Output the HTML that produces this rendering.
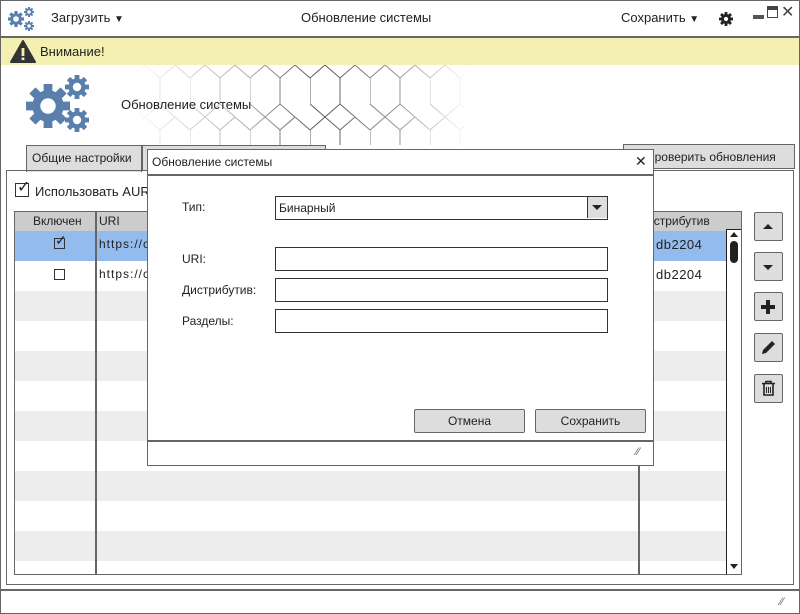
<!DOCTYPE html>
<html><head><meta charset="utf-8"><style>
*{box-sizing:border-box;margin:0;padding:0}
body{width:800px;height:614px;position:relative;background:#fff;font-family:"Liberation Sans",sans-serif;font-size:12px;color:#222;overflow:hidden}
.a{position:absolute}
.bx{position:absolute;border:1.5px solid #666}
.btn{position:absolute;background:#ddd;border:1.5px solid #666;border-radius:2px;text-align:center}
.inp{position:absolute;border:1.5px solid #333;background:#fff;height:24px}
</style></head><body>
<svg width="0" height="0" style="position:absolute"><defs>
<g id="gear"><circle r="0.72" fill="#5a7fad"/>
<g fill="#5a7fad"><rect x="-0.2" y="-1" width="0.4" height="2"/><rect x="-0.2" y="-1" width="0.4" height="2" transform="rotate(45)"/><rect x="-0.2" y="-1" width="0.4" height="2" transform="rotate(90)"/><rect x="-0.2" y="-1" width="0.4" height="2" transform="rotate(135)"/></g>
<circle r="0.35" fill="#fff"/></g>
<g id="gk"><circle r="0.72" fill="#222"/>
<g fill="#222"><rect x="-0.2" y="-1" width="0.4" height="2"/><rect x="-0.2" y="-1" width="0.4" height="2" transform="rotate(45)"/><rect x="-0.2" y="-1" width="0.4" height="2" transform="rotate(90)"/><rect x="-0.2" y="-1" width="0.4" height="2" transform="rotate(135)"/></g>
<circle r="0.3" fill="#fff"/></g>
</defs></svg>
<div class="bx" style="left:0;top:0;width:800px;height:614px"></div>
<svg class="a" style="left:6px;top:4px" width="30" height="28">
<use href="#gear" transform="translate(10,15) scale(8)"/><use href="#gear" transform="translate(23,8) scale(5)"/><use href="#gear" transform="translate(23,22) scale(5)"/></svg>
<div class="a" style="left:51px;top:10px;font-size:13px">Загрузить <span style="font-size:10px">▼</span></div>
<div class="a" style="left:301px;top:10px;font-size:13px">Обновление системы</div>
<div class="a" style="left:621px;top:10px;font-size:13px">Сохранить <span style="font-size:10px">▼</span></div>
<svg class="a" style="left:718px;top:11px" width="16" height="16"><use href="#gk" transform="translate(8,8) scale(7)"/></svg>
<div class="a" style="left:753px;top:15px;width:11px;height:4px;background:#555"></div>
<div class="a" style="left:767px;top:6px;width:11px;height:12px;border:1.5px solid #444;border-top-width:4px"></div>
<div class="a" style="left:781px;top:2px;font-size:16px;color:#444">✕</div>
<div class="a" style="left:0;top:36px;width:800px;height:1.5px;background:#666"></div>
<div class="a" style="left:1px;top:38px;width:798px;height:27px;background:#f3f0b1"></div>
<svg class="a" style="left:10px;top:40px" width="26" height="23"><path d="M13 1 L25 22 L1 22 Z" fill="#333" stroke="#333" stroke-linejoin="round" stroke-width="2"/><rect x="11.6" y="8" width="2.8" height="8" fill="#f3f0b1"/><rect x="11.6" y="17.5" width="2.8" height="2.6" fill="#f3f0b1"/></svg>
<div class="a" style="left:40px;top:44px;font-size:13px">Внимание!</div>
<svg class="a" style="left:130px;top:65px" width="340" height="80">
<defs><pattern id="hx" width="60" height="52" patternUnits="userSpaceOnUse"><path d="M0 13 L15 0 L30 13 L30 39 L15 52 L0 39 Z M30 13 L45 0 L60 13 M30 39 L45 52" fill="none" stroke="#555" stroke-width="1"/></pattern>
<linearGradient id="gr"><stop offset="0" stop-color="#fff" stop-opacity="0"/><stop offset="0.35" stop-color="#fff" stop-opacity="0.5"/><stop offset="0.55" stop-color="#fff" stop-opacity="1"/><stop offset="0.8" stop-color="#fff" stop-opacity="0.6"/><stop offset="1" stop-color="#fff" stop-opacity="0"/></linearGradient>
<mask id="mk"><rect width="340" height="80" fill="url(#gr)"/></mask></defs>
<rect width="340" height="80" fill="url(#hx)" mask="url(#mk)"/></svg>
<svg class="a" style="left:24px;top:72px" width="72" height="64">
<use href="#gear" transform="translate(24,34) scale(22)"/><use href="#gear" transform="translate(53,15) scale(12)"/><use href="#gear" transform="translate(53,48) scale(12)"/></svg>
<div class="a" style="left:121px;top:97px;font-size:13px">Обновление системы</div>
<div class="a" style="left:26px;top:145px;width:116px;height:27px;background:#ddd;border:1.5px solid #666;border-bottom:none;padding:5px 0 0 5px;font-size:12px">Общие настройки</div>
<div class="a" style="left:142px;top:145px;width:184px;height:26px;background:#ddd;border:1.5px solid #666;border-bottom:none"></div>
<div class="a" style="left:623px;top:144px;width:172px;height:25px;background:#ddd;border:1.5px solid #666;padding:5px 0 0 22px;font-size:12px">Проверить обновления</div>
<div class="bx" style="left:6px;top:170px;width:788px;height:415px"></div>
<div class="a" style="left:15px;top:183px;width:14px;height:14px;border:1.5px solid #333"></div>
<div class="a" style="left:17px;top:177px;font-size:16px">✓</div>
<div class="a" style="left:35px;top:184px;font-size:13px">Использовать AUR</div>
<div class="a" style="left:14px;top:211px;width:728px;height:364px;border:1.5px solid #666;overflow:hidden">
 <div class="a" style="left:0;top:0;width:728px;height:19px;background:#ccc"></div>
 <div class="a" style="left:0;top:19px;width:728px;height:30px;background:#94bbee"></div>
 <div class="a" style="left:0;top:79px;width:728px;height:30px;background:#ededed"></div>
 <div class="a" style="left:0;top:139px;width:728px;height:30px;background:#ededed"></div>
 <div class="a" style="left:0;top:199px;width:728px;height:30px;background:#ededed"></div>
 <div class="a" style="left:0;top:259px;width:728px;height:30px;background:#ededed"></div>
 <div class="a" style="left:0;top:319px;width:728px;height:30px;background:#ededed"></div>
 <div class="a" style="left:80px;top:0;width:1.5px;height:364px;background:#666"></div>
 <div class="a" style="left:623px;top:0;width:1.5px;height:364px;background:#666"></div>
 <div class="a" style="left:18px;top:2px;font-size:12px">Включен</div>
 <div class="a" style="left:84px;top:2px;font-size:12px">URI</div>
 <div class="a" style="left:632px;top:2px;font-size:12px">истрибутив</div>
 <div class="a" style="left:39px;top:26px;width:11px;height:11px;border:1.5px solid #333"></div>
 <div class="a" style="left:40px;top:20px;font-size:14px">✓</div>
 <div class="a" style="left:39px;top:57px;width:11px;height:11px;border:1.5px solid #333;background:#fff"></div>
 <div class="a" style="left:84px;top:25px;font-size:12px;letter-spacing:1px">https://c</div>
 <div class="a" style="left:84px;top:55px;font-size:12px;letter-spacing:1px">https://c</div>
 <div class="a" style="left:641px;top:25px;font-size:13px;letter-spacing:0.5px">db2204</div>
 <div class="a" style="left:641px;top:55px;font-size:13px;letter-spacing:0.5px">db2204</div>
 <div class="a" style="left:711px;top:17px;width:16px;height:347px;border:1.5px solid #222;background:#fff"></div>
 <div class="a" style="left:715px;top:20px;width:0;height:0;border:4px solid transparent;border-bottom:5px solid #222;border-top:none"></div>
 <div class="a" style="left:715px;top:29px;width:8px;height:22px;background:#222;border-radius:4px"></div>
 <div class="a" style="left:715px;top:352px;width:0;height:0;border:4px solid transparent;border-top:5px solid #222;border-bottom:none"></div>
</div>
<div class="btn" style="left:754px;top:212px;width:29px;height:29px"><div class="a" style="left:8px;top:11px;border:5px solid transparent;border-bottom:5px solid #222;border-top:none"></div></div>
<div class="btn" style="left:754px;top:252px;width:29px;height:29px"><div class="a" style="left:8px;top:12px;border:5px solid transparent;border-top:5px solid #222;border-bottom:none"></div></div>
<div class="btn" style="left:754px;top:292px;width:29px;height:29px"><div class="a" style="left:6px;top:12px;width:14px;height:3.5px;background:#222"></div><div class="a" style="left:11.3px;top:6.5px;width:3.5px;height:14px;background:#222"></div></div>
<div class="btn" style="left:754px;top:333px;width:29px;height:29px"><svg class="a" style="left:5px;top:5px" width="17" height="17"><path d="M2 15 L3 11 L12 2 L15 5 L6 14 Z" fill="#222"/></svg></div>
<div class="btn" style="left:754px;top:374px;width:29px;height:29px"><svg class="a" style="left:6px;top:5px" width="15" height="17"><path d="M1 3.5 H14 M5 3 V1.5 H10 V3 M3 4 V15 H12 V4" fill="none" stroke="#222" stroke-width="1.6"/><path d="M5.5 7 V13 M7.5 7 V13 M9.5 7 V13" stroke="#222" stroke-width="1"/></svg></div>
<div class="a" style="left:0;top:589px;width:800px;height:1.5px;background:#666"></div>
<div class="a" style="left:780px;top:596px;font-size:11px;color:#666">⁄⁄</div>
<div class="a" style="left:147px;top:149px;width:507px;height:317px;background:#fff;border:1.5px solid #666">
 <div class="a" style="left:4px;top:5px;font-size:12px">Обновление системы</div>
 <div class="a" style="left:487px;top:3px;font-size:14px">✕</div>
 <div class="a" style="left:0;top:24px;width:505px;height:1.5px;background:#666"></div>
 <div class="a" style="left:34px;top:50px;font-size:12px">Тип:</div>
 <div class="a" style="left:34px;top:102px;font-size:12px">URI:</div>
 <div class="a" style="left:34px;top:133px;font-size:12px">Дистрибутив:</div>
 <div class="a" style="left:34px;top:164px;font-size:12px">Разделы:</div>
 <div class="inp" style="left:127px;top:46px;width:333px;padding:4px 0 0 3px;font-size:12px">Бинарный<div class="a" style="right:0;top:0;width:20px;height:21px;background:#ddd;border-left:1.5px solid #333"><div class="a" style="left:4px;top:8px;border:5px solid transparent;border-top:5px solid #222;border-bottom:none"></div></div></div>
 <div class="inp" style="left:127px;top:97px;width:333px"></div>
 <div class="inp" style="left:127px;top:128px;width:333px"></div>
 <div class="inp" style="left:127px;top:159px;width:333px"></div>
 <div class="btn" style="left:266px;top:259px;width:111px;height:24px;padding-top:4px;font-size:12px">Отмена</div>
 <div class="btn" style="left:387px;top:259px;width:111px;height:24px;padding-top:4px;font-size:12px">Сохранить</div>
 <div class="a" style="left:0;top:290px;width:505px;height:1.5px;background:#666"></div>
 <div class="a" style="left:488px;top:296px;font-size:11px;color:#666">⁄⁄</div>
</div>
</body></html>
